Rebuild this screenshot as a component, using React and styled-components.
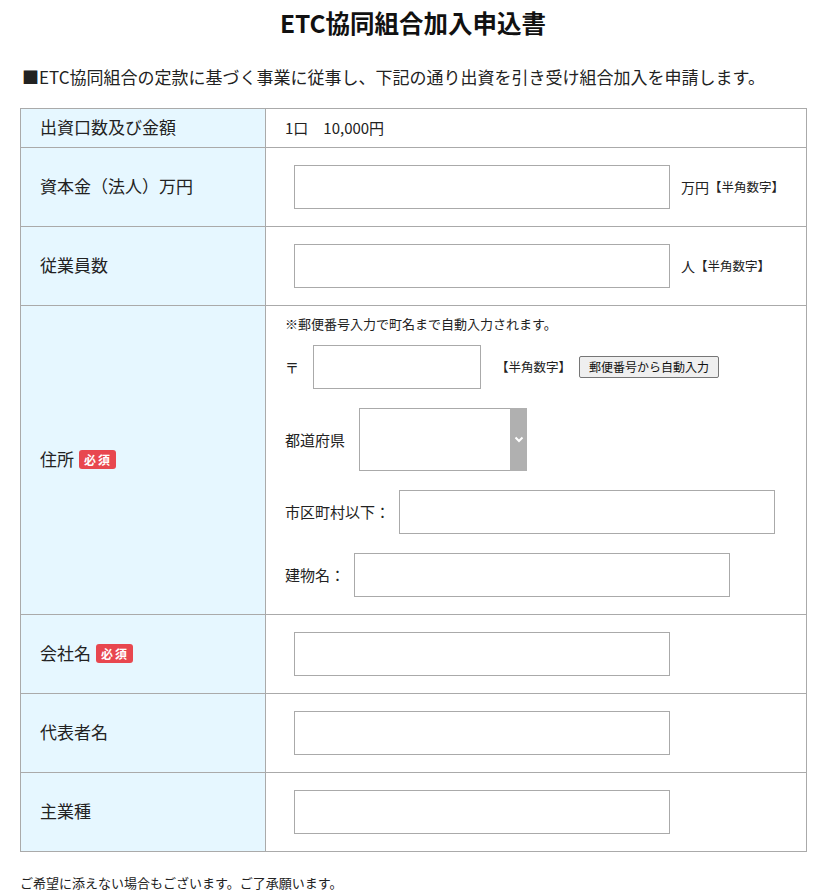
import React from "react";
import styled, { createGlobalStyle } from "styled-components";

const Global = createGlobalStyle`
  html, body { margin: 0; padding: 0; background: #fff; }
  body {
    font-family: "Noto Sans CJK JP", "Noto Sans", sans-serif;
    color: #222;
  }
  * { box-sizing: border-box; }
`;

const Page = styled.div`
  padding: 0 14px 20px 20px;
`;

const Title = styled.h1`
  margin: 0;
  padding-top: 8px;
  font-size: 24.5px;
  line-height: 30px;
  font-weight: 700;
  text-align: center;
  color: #111;
`;

const Intro = styled.p`
  margin: 27px 0 19px 2px;
  font-size: 17px;
  line-height: 24px;
`;

const Table = styled.table`
  width: 787px;
  border-collapse: collapse;
  table-layout: fixed;
`;

const LabelCell = styled.th`
  width: 245px;
  border: 1px solid #aaa;
  background: #e6f7ff;
  text-align: left;
  font-weight: 400;
  font-size: 17px;
  line-height: 20px;
  padding: ${(p) => (p.$compact ? "8px 19px 10px" : "0 19px 3px")};
  vertical-align: middle;
`;

const ValueCell = styled.td`
  border: 1px solid #aaa;
  padding: ${(p) => p.$pad || "17px 19px"};
  vertical-align: middle;
  font-size: 14px;
  line-height: 20px;
`;

const Plain = styled.span`
  font-size: 15px;
  line-height: 20px;
`;

const Badge = styled.span`
  display: inline-block;
  margin-left: 5px;
  padding: 0 4px 0 5px;
  height: 19px;
  line-height: 19px;
  font-size: 12px;
  font-weight: 700;
  letter-spacing: 2px;
  color: #fff;
  background: #e8474f;
  border-radius: 3px;
  vertical-align: 1px;
`;

const FieldRow = styled.div`
  display: flex;
  align-items: center;
`;

const TextInput = styled.input`
  width: ${(p) => p.$w || 376}px;
  height: 44px;
  margin-left: ${(p) => p.$ml ?? 9}px;
  border: 1px solid #aaa;
  border-radius: 0;
  padding: 0 8px;
  font-size: 15px;
  background: #fff;
  outline: none;
`;

const Unit = styled.span`
  margin-left: 11px;
  font-size: 14px;
  line-height: 20px;
`;

const Hint = styled.span`
  margin-left: ${(p) => p.$ml ?? 0}px;
  font-size: 12.5px;
  line-height: 20px;
`;

const AddressStack = styled.div`
  display: flex;
  flex-direction: column;
`;

const Note = styled.div`
  font-size: 13px;
  line-height: 20px;
  margin-bottom: 11px;
`;

const SubRow = styled.div`
  display: flex;
  align-items: center;
  margin-top: ${(p) => p.$mt ?? 19}px;
`;

const SubLabel = styled.span`
  font-size: 15px;
  line-height: 20px;
  margin-right: ${(p) => p.$mr ?? 9}px;
  white-space: nowrap;
`;

const PostMark = styled.span`
  font-size: 14px;
  line-height: 20px;
  width: 28px;
`;

const Button = styled.button`
  margin-left: 8px;
  height: 22px;
  padding: 0 9px;
  font-family: inherit;
  font-size: 12px;
  line-height: 20px;
  color: #111;
  background: #efefef;
  border: 1px solid #767676;
  border-radius: 2px;
`;

const SelectBox = styled.div`
  display: flex;
  width: 168px;
  height: 63px;
  border: 1px solid #aaa;
  background: #fff;
`;

const NativeSelect = styled.select`
  flex: 1;
  min-width: 0;
  appearance: none;
  border: none;
  background: transparent;
  font-size: 15px;
  outline: none;
`;

const Arrow = styled.span`
  width: 17px;
  margin: -1px -1px -1px 0;
  background: #b0b0b0;
  display: flex;
  align-items: center;
  justify-content: center;
`;

const Footer = styled.p`
  margin: 21px 0 0 0;
  font-size: 13px;
  line-height: 20px;
`;

function TextRow({ label, badge, unit }) {
  return (
    <tr>
      <LabelCell>
        {label}
        {badge && <Badge>必須</Badge>}
      </LabelCell>
      <ValueCell>
        <FieldRow>
          <TextInput type="text" />
          {unit && (
            <>
              <Unit>{unit}</Unit>
              <Hint>【半角数字】</Hint>
            </>
          )}
        </FieldRow>
      </ValueCell>
    </tr>
  );
}

export default function App() {
  return (
    <>
      <Global />
      <Page>
        <Title>ETC協同組合加入申込書</Title>
        <Intro>■ETC協同組合の定款に基づく事業に従事し、下記の通り出資を引き受け組合加入を申請します。</Intro>
        <Table>
          <tbody>
            <tr>
              <LabelCell $compact>出資口数及び金額</LabelCell>
              <ValueCell $pad="9px 19px">
                <Plain>1口　10,000円</Plain>
              </ValueCell>
            </tr>
            <TextRow label="資本金（法人）万円" unit="万円" />
            <TextRow label="従業員数" unit="人" />
            <tr>
              <LabelCell>
                住所
                <Badge>必須</Badge>
              </LabelCell>
              <ValueCell $pad="8px 19px 17px">
                <AddressStack>
                  <Note>※郵便番号入力で町名まで自動入力されます。</Note>
                  <SubRow $mt={0}>
                    <PostMark>〒</PostMark>
                    <TextInput type="text" $w={168} $ml={0} />
                    <Hint $ml={15}>【半角数字】</Hint>
                    <Button type="button">郵便番号から自動入力</Button>
                  </SubRow>
                  <SubRow>
                    <SubLabel $mr={14}>都道府県</SubLabel>
                    <SelectBox>
                      <NativeSelect defaultValue="">
                        <option value=""></option>
                      </NativeSelect>
                      <Arrow>
                        <svg width="10" height="7" viewBox="0 0 10 7">
                          <path d="M1.5 1.5 L5 5 L8.5 1.5" fill="none" stroke="#fff" strokeWidth="2" />
                        </svg>
                      </Arrow>
                    </SelectBox>
                  </SubRow>
                  <SubRow>
                    <SubLabel>市区町村以下：</SubLabel>
                    <TextInput type="text" $ml={0} />
                  </SubRow>
                  <SubRow>
                    <SubLabel>建物名：</SubLabel>
                    <TextInput type="text" $ml={0} />
                  </SubRow>
                </AddressStack>
              </ValueCell>
            </tr>
            <TextRow label="会社名" badge />
            <TextRow label="代表者名" />
            <TextRow label="主業種" />
          </tbody>
        </Table>
        <Footer>ご希望に添えない場合もございます。ご了承願います。</Footer>
      </Page>
    </>
  );
}
